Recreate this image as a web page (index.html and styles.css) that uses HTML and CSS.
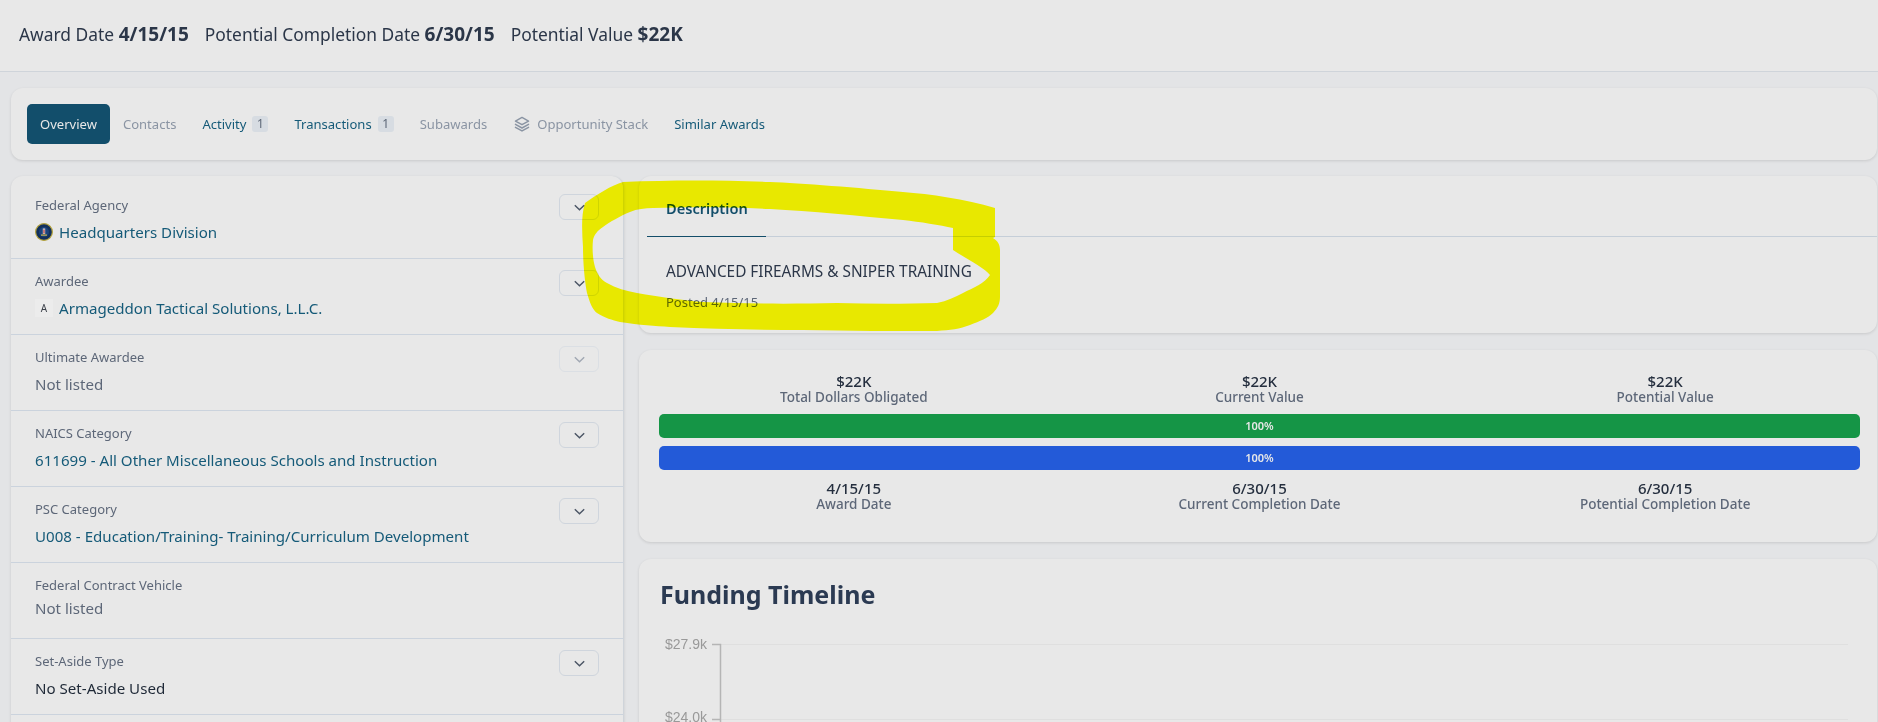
FILE: index.html
```html
<!DOCTYPE html>
<html lang="en">
<head>
  <meta charset="UTF-8">
  <title>Award Overview</title>
  <link rel="stylesheet" href="styles.css">
</head>
<body>
  <header class="topbar">
    <span>Award Date <b>4/15/15</b></span>
    <span>Potential Completion Date <b>6/30/15</b></span>
    <span>Potential Value <b>$22K</b></span>
  </header>

  <main class="page">
    <nav class="card tabs">
      <a class="tab tab--active">Overview</a>
      <a class="tab tab--off">Contacts</a>
      <a class="tab">Activity <span class="badge">1</span></a>
      <a class="tab">Transactions <span class="badge">1</span></a>
      <a class="tab tab--off">Subawards</a>
      <a class="tab tab--off">
        <svg class="stack-icon" viewBox="0 0 24 22" fill="none" stroke="currentColor" stroke-width="2" stroke-linejoin="round" stroke-linecap="round">
          <path d="M12 2 21 7 12 12 3 7Z"/>
          <path d="M3 11.5 12 16.5 21 11.5"/>
          <path d="M3 15.5 12 20.5 21 15.5"/>
        </svg>
        Opportunity Stack
      </a>
      <a class="tab">Similar Awards</a>
    </nav>

    <div class="columns">
      <aside class="card details">
        <div class="row">
          <div class="row__head">
            <span class="row__label">Federal Agency</span>
            <button class="chev"><svg viewBox="0 0 16 16"><path d="M3 5.5 8 10.5 13 5.5"/></svg></button>
          </div>
          <div class="row__value row__value--link">
            <svg class="seal" viewBox="0 0 18 18">
              <circle cx="9" cy="9" r="8.4" fill="#12305c" stroke="#b9a63e" stroke-width="1.2"/>
              <circle cx="9" cy="9" r="5" fill="#1c447c"/>
              <rect x="7.8" y="5.5" width="2.4" height="5.5" fill="#d9d9d9"/>
              <rect x="8.4" y="6.5" width="1.2" height="4" fill="#b53a3a"/>
              <rect x="6" y="11.5" width="6" height="1.2" fill="#c9b64c"/>
            </svg>
            Headquarters Division
          </div>
        </div>
        <div class="row">
          <div class="row__head">
            <span class="row__label">Awardee</span>
            <button class="chev"><svg viewBox="0 0 16 16"><path d="M3 5.5 8 10.5 13 5.5"/></svg></button>
          </div>
          <div class="row__value row__value--link">
            <span class="logo-letter">A</span>
            Armageddon Tactical Solutions, L.L.C.
          </div>
        </div>
        <div class="row">
          <div class="row__head">
            <span class="row__label">Ultimate Awardee</span>
            <button class="chev chev--off"><svg viewBox="0 0 16 16"><path d="M3 5.5 8 10.5 13 5.5"/></svg></button>
          </div>
          <div class="row__value row__value--muted">Not listed</div>
        </div>
        <div class="row">
          <div class="row__head">
            <span class="row__label">NAICS Category</span>
            <button class="chev"><svg viewBox="0 0 16 16"><path d="M3 5.5 8 10.5 13 5.5"/></svg></button>
          </div>
          <div class="row__value row__value--link">611699 - All Other Miscellaneous Schools and Instruction</div>
        </div>
        <div class="row">
          <div class="row__head">
            <span class="row__label">PSC Category</span>
            <button class="chev"><svg viewBox="0 0 16 16"><path d="M3 5.5 8 10.5 13 5.5"/></svg></button>
          </div>
          <div class="row__value row__value--link">U008 - Education/Training- Training/Curriculum Development</div>
        </div>
        <div class="row">
          <div class="row__head">
            <span class="row__label">Federal Contract Vehicle</span>
          </div>
          <div class="row__value row__value--muted">Not listed</div>
        </div>
        <div class="row">
          <div class="row__head">
            <span class="row__label">Set-Aside Type</span>
            <button class="chev"><svg viewBox="0 0 16 16"><path d="M3 5.5 8 10.5 13 5.5"/></svg></button>
          </div>
          <div class="row__value">No Set-Aside Used</div>
        </div>
      </aside>

      <section class="right">
        <div class="card desc">
          <div class="desc__tabs"><span class="desc__tab">Description</span></div>
          <p class="desc__text">ADVANCED FIREARMS &amp; SNIPER TRAINING</p>
          <p class="desc__posted">Posted 4/15/15</p>
        </div>

        <div class="card stats">
          <div class="stats__grid">
            <div class="stat"><b>$22K</b><span>Total Dollars Obligated</span></div>
            <div class="stat"><b>$22K</b><span>Current Value</span></div>
            <div class="stat"><b>$22K</b><span>Potential Value</span></div>
          </div>
          <div class="bar bar--green">100%</div>
          <div class="bar bar--blue">100%</div>
          <div class="stats__grid stats__grid--dates">
            <div class="stat"><b>4/15/15</b><span>Award Date</span></div>
            <div class="stat"><b>6/30/15</b><span>Current Completion Date</span></div>
            <div class="stat"><b>6/30/15</b><span>Potential Completion Date</span></div>
          </div>
        </div>

        <div class="card funding">
          <h2 class="funding__title">Funding Timeline</h2>
          <svg class="chart" width="1238" height="140">
            <text class="chart__tick" x="68" y="9.5" text-anchor="end">$27.9k</text>
            <text class="chart__tick" x="68" y="82.5" text-anchor="end">$24.0k</text>
            <path class="chart__grid" d="M81 5.5H1209M81 80.5H1209"/>
            <path class="chart__axis" d="M73 5.5H81.5V140M73 80.5H81.5"/>
          </svg>
        </div>
      </section>
    </div>
  </main>

  <svg class="marker" viewBox="0 0 1878 722" width="1878" height="722">
    <path fill-rule="evenodd" d="M995 208C965 199 930 194 903 192C860 188 800 183 770 182C720 180 670 180 623 182C612 185 596 195 585 203C581 215 582 232 583 247C583 265 585 282 587 293C590 303 592 309 597 313C605 318 612 320 620 322C640 325 655 326 670 327C715 329 760 330 803 330C850 331 895 331 937 331C950 330 960 329 970 325C980 321 988 318 993 313C998 308 1000 303 1000 297L1000 250C1000 245 998 241 993 238L995 237Z
      M953 228C940 225 920 222 903 220C860 216 810 211 770 209C730 207 690 207 653 208C645 208 637 209 630 212C620 216 610 222 603 227C597 231 594 235 593 240C592 250 593 260 595 267C597 274 601 280 607 283C616 288 626 291 637 293C660 297 680 300 703 302C750 304 795 304 837 303C870 304 905 304 937 303C947 301 955 297 963 293C973 288 985 283 990 275C985 268 965 258 953 250Z"/>
  </svg>
</body>
</html>
```

FILE: styles.css
```css
html, body {
  margin: 0;
  height: 722px;
  overflow: hidden;
}

body {
  position: relative;
  background: #e3e4e6;
  font-family: "Noto Sans", "Open Sans", sans-serif;
  color: #2b3648;
}

.card {
  background: #e8e8e8;
  border-radius: 12px;
  box-shadow: 0 1px 3px rgba(0, 0, 0, 0.12);
}

.topbar {
  display: flex;
  gap: 16px;
  height: 68px;
  padding: 0 0 3px 19px;
  align-items: center;
  background: #e8e8e8;
  border-bottom: 1px solid #cfd4da;
  font-size: 17.4px;
}

.topbar b {
  font-size: 19px;
  font-weight: 700;
}

.page {
  padding: 16px 1px 0 11px;
}

.tabs {
  display: flex;
  align-items: center;
  height: 72px;
  padding-left: 16px;
}

.tab {
  display: flex;
  align-items: center;
  gap: 6px;
  height: 40px;
  padding: 0 13px;
  font-size: 13.05px;
  color: #155a78;
  border-radius: 5px;
}

.tab--active {
  background: #124e6b;
  color: #e8e8e8;
}

.tab--off {
  color: #8a94a3;
}

.badge {
  width: 16px;
  height: 16px;
  line-height: 16px;
  text-align: center;
  border-radius: 3px;
  background: #d7dce2;
  color: #5c6675;
  font-size: 12px;
}

.stack-icon {
  width: 18px;
  height: 16px;
}

.columns {
  display: flex;
  gap: 15px;
  margin-top: 16px;
  align-items: flex-start;
}

.details {
  width: 613px;
  height: 700px;
  flex: none;
  padding-top: 7px;
  border-right: 1px solid #cfd4da;
  box-sizing: border-box;
}

.row {
  height: 76px;
  box-sizing: border-box;
  padding: 11px 24px 0;
  border-bottom: 1px solid #cbd3dd;
}

.row__head {
  display: flex;
  justify-content: space-between;
  align-items: flex-start;
}

.row__label {
  font-size: 13px;
  line-height: 22px;
  color: #5d6778;
}

.chev {
  width: 40px;
  height: 26px;
  padding: 0;
  display: flex;
  align-items: center;
  justify-content: center;
  background: none;
  border: 1px solid #cfd5dd;
  border-radius: 6px;
}

.chev svg {
  width: 15px;
  height: 15px;
  fill: none;
  stroke: #4b5565;
  stroke-width: 1.5;
}

.chev--off svg {
  stroke: #a1a8b3;
}

.chev--off {
  border-color: #dbdfe4;
}

.row__value {
  display: flex;
  align-items: center;
  gap: 6px;
  font-size: 15.1px;
  line-height: 24px;
  color: #1f2937;
}

.row__value--link {
  color: #155a78;
}

.row__value--muted {
  color: #5d6778;
}

.seal {
  width: 18px;
  height: 18px;
}

.logo-letter {
  width: 18px;
  height: 18px;
  line-height: 18px;
  text-align: center;
  font-size: 10px;
  color: #3a3f48;
  background: #ececec;
}

.right {
  flex: 1;
  min-width: 0;
  display: flex;
  flex-direction: column;
  gap: 17px;
}

.desc {
  height: 157px;
  box-sizing: border-box;
  padding-left: 8px;
}

.desc__tabs {
  height: 61px;
  box-sizing: border-box;
  border-bottom: 1px solid #c5ced8;
}

.desc__tab {
  display: inline-block;
  box-sizing: border-box;
  height: 61px;
  width: 119px;
  padding: 21px 0 0 19px;
  font-size: 14.6px;
  line-height: 22px;
  font-weight: 600;
  color: #134e6a;
  border-bottom: 1px solid #134e6a;
}

.desc__text {
  margin: 22px 0 0 19px;
  font-size: 15.35px;
  line-height: 24px;
  color: #2b3648;
}

.desc__posted {
  margin: 9px 0 0 19px;
  font-size: 13px;
  line-height: 20px;
  color: #5d6778;
}

.stats {
  height: 192px;
  box-sizing: border-box;
  padding: 22px 17px 0 20px;
}

.stats__grid {
  display: grid;
  grid-template-columns: repeat(3, 1fr);
  gap: 16px;
  margin-bottom: 9px;
}

.stats__grid--dates {
  margin-top: 9px;
}

.stat {
  display: flex;
  flex-direction: column;
  align-items: center;
}

.stat b {
  font-size: 15px;
  line-height: 18px;
  font-weight: 500;
  color: #242e3e;
}

.stat span {
  font-size: 13.5px;
  line-height: 15px;
  font-weight: 500;
  color: #5d6778;
}

.bar {
  height: 24px;
  line-height: 24px;
  margin-bottom: 8px;
  border-radius: 5px;
  text-align: center;
  font-size: 11px;
  font-weight: 600;
  color: #e8e8e8;
}

.bar--green {
  background: #159546;
}

.bar--blue {
  background: #235ad8;
}

.funding {
  height: 300px;
}

.funding__title {
  margin: 0;
  padding: 19px 0 0 21px;
  font-size: 25px;
  line-height: 32px;
  font-weight: 700;
  color: #2b3a52;
}

.chart {
  display: block;
  margin-top: 29px;
}

.chart__tick {
  font-family: "Liberation Sans", sans-serif;
  font-size: 14px;
  fill: #999;
}

.chart__grid {
  fill: none;
  stroke: #dfdfdf;
}

.chart__axis {
  fill: none;
  stroke: #b5b5b5;
  stroke-width: 1.5;
}

/* highlighter scribble drawn over the page */
.marker {
  position: absolute;
  left: 0;
  top: 0;
  pointer-events: none;
  fill: #ffff00;
  mix-blend-mode: multiply;
}
```
